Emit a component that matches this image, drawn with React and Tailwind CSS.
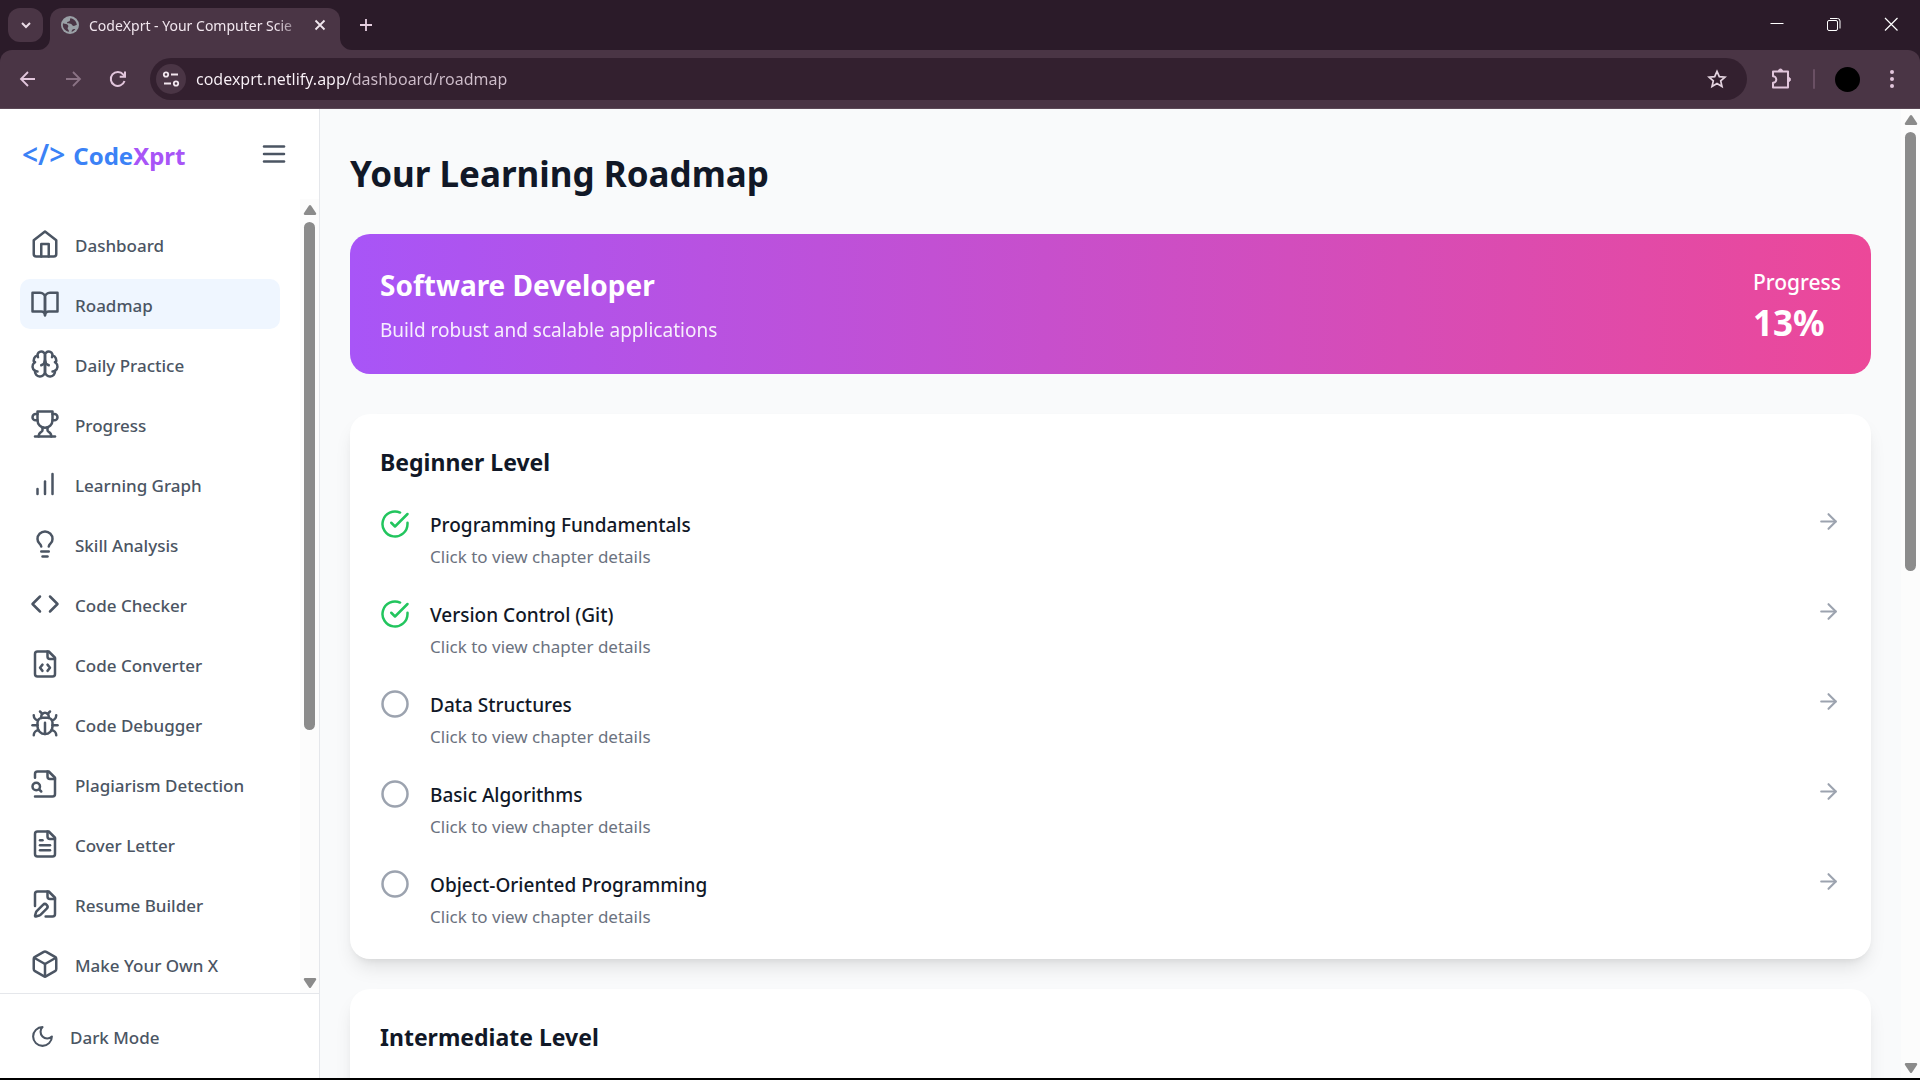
import React, { useState } from 'react';

// Stroke icon base, all paths are on a 24px grid
function Icon({ paths, className = 'size-[30px]', strokeWidth = 2, children }) {
  return (
    <svg
      viewBox="0 0 24 24"
      fill="none"
      stroke="currentColor"
      strokeWidth={strokeWidth}
      strokeLinecap="round"
      strokeLinejoin="round"
      className={`${className} shrink-0`}
      aria-hidden="true"
    >
      {paths?.map((d) => <path key={d} d={d} />)}
      {children}
    </svg>
  );
}

const filePage = 'M15 2H6a2 2 0 0 0-2 2v16a2 2 0 0 0 2 2h12a2 2 0 0 0 2-2V7Z';
const fileFold = 'M14 2v4a2 2 0 0 0 2 2h4';

const navItems = [
  {
    label: 'Dashboard',
    paths: ['m3 9 9-7 9 7v11a2 2 0 0 1-2 2H5a2 2 0 0 1-2-2z', 'M9 22V12h6v10']
  },
  {
    label: 'Roadmap',
    active: true,
    paths: ['M2 3h6a4 4 0 0 1 4 4v14a3 3 0 0 0-3-3H2z', 'M22 3h-6a4 4 0 0 0-4 4v14a3 3 0 0 1 3-3h7z']
  },
  {
    label: 'Daily Practice',
    paths: [
      'M12 5a3 3 0 1 0-5.997.125 4 4 0 0 0-2.526 5.77 4 4 0 0 0 .556 6.588A4 4 0 1 0 12 18Z',
      'M12 5a3 3 0 1 1 5.997.125 4 4 0 0 1 2.526 5.77 4 4 0 0 1-.556 6.588A4 4 0 1 1 12 18Z',
      'M15 13a4.5 4.5 0 0 1-3-4 4.5 4.5 0 0 1-3 4',
      'M17.599 6.5a3 3 0 0 0 .399-1.375',
      'M6.003 5.125A3 3 0 0 0 6.401 6.5',
      'M3.477 10.896a4 4 0 0 1 .585-.396',
      'M19.938 10.5a4 4 0 0 1 .585.396',
      'M6 18a4 4 0 0 1-1.967-.516',
      'M19.967 17.484A4 4 0 0 1 18 18'
    ]
  },
  {
    label: 'Progress',
    paths: [
      'M6 9H4.5a2.5 2.5 0 0 1 0-5H6',
      'M18 9h1.5a2.5 2.5 0 0 0 0-5H18',
      'M4 22h16',
      'M10 14.66V17c0 .55-.47.98-.97 1.21C7.85 18.75 7 20.24 7 22',
      'M14 14.66V17c0 .55.47.98.97 1.21C16.15 18.75 17 20.24 17 22',
      'M18 2H6v7a6 6 0 0 0 12 0V2Z'
    ]
  },
  { label: 'Learning Graph', paths: ['M12 20V10', 'M18 20V4', 'M6 20v-4'] },
  {
    label: 'Skill Analysis',
    paths: [
      'M15 14c.2-1 .7-1.7 1.5-2.5 1-.9 1.5-2.2 1.5-3.5A6 6 0 0 0 6 8c0 1 .2 2.2 1.5 3.5.7.7 1.3 1.5 1.5 2.5',
      'M9 18h6',
      'M10 22h4'
    ]
  },
  { label: 'Code Checker', paths: ['m16 18 6-6-6-6', 'm8 6-6 6 6 6'] },
  {
    label: 'Code Converter',
    paths: [filePage, fileFold, 'M10 12.5 8 15l2 2.5', 'm14 12.5 2 2.5-2 2.5']
  },
  {
    label: 'Code Debugger',
    paths: [
      'm8 2 1.88 1.88',
      'M14.12 3.88 16 2',
      'M9 7.13v-1a3.003 3.003 0 1 1 6 0v1',
      'M12 20c-3.3 0-6-2.7-6-6v-3a4 4 0 0 1 4-4h4a4 4 0 0 1 4 4v3c0 3.3-2.7 6-6 6',
      'M12 20v-9',
      'M6.53 9C4.6 8.8 3 7.1 3 5',
      'M6 13H2',
      'M3 21c0-2.1 1.7-3.9 3.8-4',
      'M20.97 5c0 2.1-1.6 3.8-3.5 4',
      'M22 13h-4',
      'M17.2 17c2.1.1 3.8 1.9 3.8 4'
    ]
  },
  {
    label: 'Plagiarism Detection',
    paths: [
      fileFold,
      'M4 22h14a2 2 0 0 0 2-2V7l-5-5H6a2 2 0 0 0-2 2v3',
      'm9 18-1.5-1.5',
      'M2 14a3 3 0 1 0 6 0 3 3 0 1 0-6 0'
    ]
  },
  { label: 'Cover Letter', paths: [filePage, fileFold, 'M10 9H8', 'M16 13H8', 'M16 17H8'] },
  {
    label: 'Resume Builder',
    paths: [
      'M12.5 22H18a2 2 0 0 0 2-2V7l-5-5H6a2 2 0 0 0-2 2v9.5',
      fileFold,
      'M13.378 15.626a1 1 0 1 0-3.004-3.004l-5.01 5.012a2 2 0 0 0-.506.854l-.837 2.87a.5.5 0 0 0 .62.62l2.87-.837a2 2 0 0 0 .854-.506z'
    ]
  },
  {
    label: 'Make Your Own X',
    paths: [
      'M21 8a2 2 0 0 0-1-1.73l-7-4a2 2 0 0 0-2 0l-7 4A2 2 0 0 0 3 8v8a2 2 0 0 0 1 1.73l7 4a2 2 0 0 0 2 0l7-4A2 2 0 0 0 21 16Z',
      'm3.3 7 8.7 5 8.7-5',
      'M12 22V12'
    ]
  }
];

const levels = [
  {
    title: 'Beginner Level',
    chapters: [
      { title: 'Programming Fundamentals', done: true },
      { title: 'Version Control (Git)', done: true },
      { title: 'Data Structures', done: false },
      { title: 'Basic Algorithms', done: false },
      { title: 'Object-Oriented Programming', done: false }
    ]
  },
  { title: 'Intermediate Level', chapters: [] }
];

function TabStrip() {
  return (
    <div className="flex h-[50px] shrink-0 items-start bg-[#2b1b29] pl-2 pt-2">
      <button aria-label="Search tabs" className="flex h-[34px] w-[35px] items-center justify-center rounded-xl bg-[#4a3545] text-[#eadbe6]">
        <svg viewBox="0 0 12 12" className="size-3" fill="none" stroke="currentColor" strokeWidth="2">
          <path d="m2 4 4 4 4-4" />
        </svg>
      </button>

      <div className="relative ml-[7px] flex h-[42px] w-[290px] items-center rounded-t-xl bg-[#4a3545] pb-2 pl-[11px] pr-3">
        <svg viewBox="0 0 12 12" className="absolute -left-3 bottom-0 size-3 fill-[#4a3545]">
          <path d="M12 0v12H0A12 12 0 0 0 12 0Z" />
        </svg>
        <svg viewBox="0 0 12 12" className="absolute -right-3 bottom-0 size-3 fill-[#4a3545]">
          <path d="M0 0v12h12A12 12 0 0 1 0 0Z" />
        </svg>
        <svg viewBox="0 0 18 18" className="size-[18px] shrink-0">
          <circle cx="9" cy="9" r="9" fill="#9aa0a6" />
          <path
            d="M2 7.2C4 8 6.500 7.800 7.200 9.400c.6 1.500-1 2-.5 3.400.3.900 1.300 1.200 1.300 2.900-3.400-.4-6.200-3.200-6.200-7zM9.500 2.200C8.300 3.200 9.700 4 8.600 5c-.9.900-2.500.4-2.600 1.500 0 1.400 2.200 1 3.600 1.200 1.600.3 1.500 2.300 3.200 2.300 1.400 0 1.400-1.200 3-1-.1-3.500-2.800-6.300-6.300-6.800zM10.500 15.700c1.600-.3 3-1.300 3.900-2.500-1.200-.6-2.400-.3-3.100.6-.5.700-.8 1.200-.8 1.900z"
            fill="#4a3545"
          />
        </svg>
        <span className="ml-2.5 flex-1 whitespace-nowrap text-[14px] text-[#f1e6ee] [mask-image:linear-gradient(90deg,#000_85%,transparent)]">
          CodeXprt - Your Computer Scie
        </span>
        <button aria-label="Close tab" className="ml-1 text-[#f1e6ee]">
          <svg viewBox="0 0 16 16" className="size-4" fill="none" stroke="currentColor" strokeWidth="1.8">
            <path d="m3.500 3.500 9 9M12.500 3.500l-9 9" />
          </svg>
        </button>
      </div>

      <button aria-label="New tab" className="ml-[18px] mt-[9px] text-[#e6cfe0]">
        <svg viewBox="0 0 16 16" className="size-4" fill="none" stroke="currentColor" strokeWidth="1.8">
          <path d="M8 2v12M2 8h12" />
        </svg>
      </button>

      <div className="ml-auto mt-2 flex gap-[41px] pr-[21px] text-white">
        <button aria-label="Minimize">
          <svg viewBox="0 0 16 16" className="size-4" fill="none" stroke="currentColor">
            <path d="M1.500 7.500h13" />
          </svg>
        </button>
        <button aria-label="Restore">
          <svg viewBox="0 0 16 16" className="size-4" fill="none" stroke="currentColor">
            <rect x="1.500" y="4.500" width="10" height="10" rx="1.500" />
            <path d="M4 2.500h7.500a2.500 2.500 0 0 1 2.500 2.500v7.500" />
          </svg>
        </button>
        <button aria-label="Close">
          <svg viewBox="0 0 16 16" className="size-4" fill="none" stroke="currentColor" strokeWidth="1.200">
            <path d="m2 2 12.500 12.500M14.500 2 2 14.500" />
          </svg>
        </button>
      </div>
    </div>
  );
}

function Toolbar() {
  return (
    <div className="shrink-0 bg-[#2b1b29]">
      <div className="flex h-[59px] items-center rounded-t-xl border-b border-[#5b4856] bg-[#4a3545] px-[18px] text-[#e2c6dc]">
        <button aria-label="Back">
          <svg viewBox="0 0 20 20" className="size-5" fill="none" stroke="currentColor" strokeWidth="1.800">
            <path d="M17 10H3.500M10 3l-7 7 7 7" />
          </svg>
        </button>
        <button aria-label="Forward" className="ml-[25px] text-[#8b7385]">
          <svg viewBox="0 0 20 20" className="size-5" fill="none" stroke="currentColor" strokeWidth="1.800">
            <path d="M3 10h13.500M10 3l7 7-7 7" />
          </svg>
        </button>
        <button aria-label="Reload" className="ml-[25px]">
          <svg viewBox="0 0 20 20" className="size-5" fill="none" stroke="currentColor" strokeWidth="2">
            <path d="M16.500 12a7 7 0 1 1-1.200-6.400l1 1.200" />
            <path d="M17 2.500v5.300h-5.300" />
          </svg>
        </button>

        <div className="ml-[22px] flex h-[42px] flex-1 items-center rounded-full bg-[#33202f] pl-1.5 pr-5">
          <button aria-label="View site information" className="flex size-[30px] items-center justify-center rounded-full bg-[#4a3545] text-[#f1e6ee]">
            <svg viewBox="0 0 18 18" className="size-[18px]" fill="none" stroke="currentColor" strokeWidth="1.800">
              <circle cx="4" cy="4.500" r="2.200" />
              <path d="M9 4.500h7M2 13.500h7" />
              <circle cx="14" cy="13.500" r="2.200" />
            </svg>
          </button>
          <input
            aria-label="Address"
            defaultValue="codexprt.netlify.app/dashboard/roadmap"
            className="ml-2.5 flex-1 bg-[linear-gradient(90deg,#fbf3f9_156px,#cfbecb_156px)] bg-clip-text text-[16px] text-transparent outline-none"
          />
          <button aria-label="Bookmark this tab" className="text-[#e3d3df]">
            <svg viewBox="0 0 20 20" className="size-5" fill="none" stroke="currentColor" strokeWidth="1.700">
              <path d="m10 2.300 2.300 5.300 5.700.5-4.300 3.800 1.300 5.600-5-3-5 3 1.300-5.600L2 8.100l5.700-.5z" />
            </svg>
          </button>
        </div>

        <button aria-label="Extensions" className="ml-[22px]">
          <svg viewBox="0 0 24 24" className="size-6" fill="none" stroke="currentColor" strokeWidth="2" strokeLinejoin="round">
            <path d="M4 4.500h15v16H4v-4.700a3.300 3.300 0 0 0 0-6.600z" />
            <path d="M9.500 4a2 2 0 0 1 4 0zM19.500 10.500a2 2 0 0 1 0 4z" fill="currentColor" strokeWidth="1" />
          </svg>
        </button>
        <div className="ml-5 h-5 w-0.5 rounded bg-[#6a5064]" />
        <button aria-label="Profile" className="ml-5 size-[25px] rounded-full bg-black" />
        <button aria-label="Menu" className="ml-[22px]">
          <svg viewBox="0 0 20 20" className="size-5 fill-current">
            <circle cx="10" cy="3" r="2" />
            <circle cx="10" cy="10" r="2" />
            <circle cx="10" cy="17" r="2" />
          </svg>
        </button>
      </div>
    </div>
  );
}

// Scroll track with arrows, thumb is the share of the track that is filled
function ScrollTrack({ thumb }) {
  return (
    <div className="flex w-[19px] shrink-0 flex-col items-center bg-[#fcfcfc] pb-1 pt-[5px] text-[#8b8b8b]" aria-hidden="true">
      <svg viewBox="0 0 14 12" className="h-3 w-3.5 shrink-0" fill="currentColor">
        <path d="M6 1.600a1.300 1.300 0 0 1 2 0l5 7.400c.6.900.1 2-.9 2H1.900c-1 0-1.500-1.100-.9-2z" />
      </svg>
      <div className="my-1.5 min-h-0 w-[11px] flex-1">
        <div className="w-full rounded-full bg-[#8b8b8b]" style={{ height: `${thumb}%` }} />
      </div>
      <svg viewBox="0 0 14 12" className="h-3 w-3.5 shrink-0 rotate-180" fill="currentColor">
        <path d="M6 1.600a1.300 1.300 0 0 1 2 0l5 7.400c.6.900.1 2-.9 2H1.900c-1 0-1.500-1.100-.9-2z" />
      </svg>
    </div>
  );
}

function Sidebar() {
  const [isDark, setIsDark] = useState(false);

  return (
    <aside className="flex w-80 shrink-0 flex-col border-r border-[#e5e7eb] bg-white text-[#4b5563]">
      <div className="flex h-[90px] shrink-0 items-center justify-between pl-[22px] pr-[30px]">
        <a href="#home" className="flex items-baseline gap-2 pt-0.5 text-[24px] font-bold leading-8 text-[#3b82f6]">
          <span className="text-[28px] font-semibold">&lt;/&gt;</span>
          <span>
            Code<span className="text-[#a855f7]">Xprt</span>
          </span>
        </a>
        <button aria-label="Toggle sidebar">
          <Icon paths={['M4 6h16', 'M4 12h16', 'M4 18h16']} />
        </button>
      </div>

      <div className="flex min-h-0 flex-1">
        <nav className="flex-1 overflow-hidden px-5 py-5">
          <ul className="space-y-2.5">
            {navItems.map((item) => (
              <li key={item.label}>
                <a
                  href="#nav"
                  className={`flex h-[50px] items-center gap-[15px] rounded-[10px] px-2.5 text-[17px] font-medium ${
                    item.active ? 'bg-[#eff6ff]' : ''
                  }`}
                >
                  <Icon paths={item.paths} />
                  <span className="pt-1">{item.label}</span>
                </a>
              </li>
            ))}
          </ul>
        </nav>
        <ScrollTrack thumb={67.8} />
      </div>

      <div className="flex h-[85px] shrink-0 items-center border-t border-[#e5e7eb] px-[30px]">
        <button onClick={() => setIsDark(!isDark)} className="flex items-center gap-[15px] text-[17px] font-medium">
          <Icon paths={['M12 3a6 6 0 0 0 9 9 9 9 0 1 1-9-9Z']} className="size-[25px]" />
          <span className="pt-1">Dark Mode</span>
        </button>
      </div>
    </aside>
  );
}

function ChapterRow({ title, done }) {
  return (
    <button className="flex w-full items-start text-left">
      {done ? (
        <Icon
          paths={['M22 11.08V12a10 10 0 1 1-5.93-9.14', 'm9 11 3 3L22 4']}
          className="size-[30px] text-[#22c55e]"
        />
      ) : (
        <Icon className="size-[30px] text-[#9ca3af]">
          <circle cx="12" cy="12" r="10" />
        </Icon>
      )}
      <div className="ml-5 flex-1">
        <h4 className="pt-px text-[19px] font-medium leading-[30px] text-[#111827]">{title}</h4>
        <p className="pt-1 text-[17px] leading-[25px] text-[#6b7280]">Click to view chapter details</p>
      </div>
      <Icon paths={['M5 12h14', 'm12 5 7 7-7 7']} className="size-[25px] text-[#9ca3af]" />
    </button>
  );
}

function LevelCard({ level }) {
  return (
    <section className="rounded-[20px] bg-white p-[30px] shadow-[0_12px_19px_-4px_rgba(0,0,0,0.1),0_5px_8px_-5px_rgba(0,0,0,0.1)]">
      <h3 className="mb-7 text-[23px] font-bold leading-[37px] text-[#111827]">{level.title}</h3>
      <div className="space-y-[30px]">
        {level.chapters.map((chapter) => (
          <ChapterRow key={chapter.title} {...chapter} />
        ))}
      </div>
    </section>
  );
}

export default function App() {
  return (
    <div className="flex h-screen flex-col overflow-hidden border-b-2 border-black bg-[#f9fafb] font-['Noto_Sans',sans-serif]">
      <TabStrip />
      <Toolbar />

      <div className="flex min-h-0 flex-1">
        <Sidebar />

        <main className="min-w-0 flex-1 overflow-hidden px-[30px] pt-10">
          <h1 className="text-[35px] font-bold leading-[50px] text-[#111827]">Your Learning Roadmap</h1>

          <div className="mt-[35px] flex h-[140px] items-center justify-between rounded-[20px] bg-linear-to-r/srgb from-[#a855f7] to-[#ec4899] px-[30px] pt-0.5 text-white">
            <div>
              <h2 className="text-[28px] font-bold leading-10">Software Developer</h2>
              <p className="mt-2.5 text-[19px] leading-[30px] opacity-90">Build robust and scalable applications</p>
            </div>
            <div>
              <p className="text-[21px] font-medium leading-[35px]">Progress</p>
              <p className="text-[35px] font-bold leading-[45px]">13%</p>
            </div>
          </div>

          <div className="mt-10 space-y-[30px]">
            {levels.map((level) => (
              <LevelCard key={level.title} level={level} />
            ))}
          </div>
        </main>

        <ScrollTrack thumb={47.5} />
      </div>
    </div>
  );
}
